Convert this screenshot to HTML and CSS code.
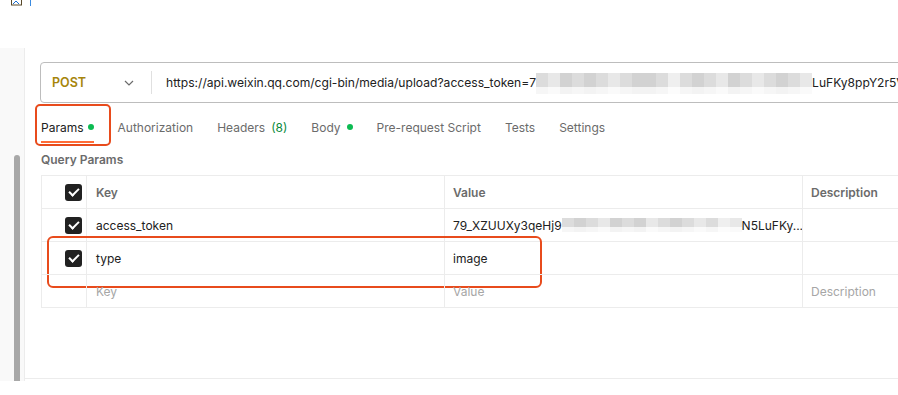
FILE: index.html
```html
<!DOCTYPE html>
<html>
<head>
<meta charset="utf-8">
<link rel="stylesheet" href="styles.css">
</head>
<body>
<div class="topbar">
  <span class="broken"><svg width="12" height="6" viewBox="0 0 12 6"><rect x="0.5" y="-3" width="10" height="8" fill="none" stroke="#5a4a2a" stroke-width="1"/><path d="M2 4 L5 1 L8 4" stroke="#1a6fd0" fill="none" stroke-width="1"/></svg></span>
  <span class="cursor"></span>
</div>
<div class="workspace">
  <div class="sidebar"><div class="thumb"></div></div>
  <div class="main">
    <div class="urlbar">
      <div class="method">POST <svg class="chev" width="10" height="6" viewBox="0 0 10 6"><path d="M1 1 L5 5 L9 1" fill="none" stroke="#6b6b6b" stroke-width="1.2"/></svg></div>
      <div class="divider"></div>
      <div class="url">https://api.weixin.qq.com/cgi-bin/media/upload?access_token=7<span class="mosaic mos-url"><span class="c c2"></span><span class="c c3"></span><span class="c c1"></span><span class="c c2"></span><span class="c c1"></span><span class="c c2"></span><span class="c c3"></span><span class="c c2"></span><span class="c c1"></span><span class="c c1"></span><span class="c c2"></span><span class="c c4"></span><span class="c c2"></span><span class="c c1"></span><span class="c c2"></span><span class="c c3"></span><span class="c c1"></span><span class="c c2"></span><span class="c c3"></span><span class="c c2"></span><span class="c c1"></span><span class="c c2"></span><span class="c c3"></span></span>LuFKy8ppY2r5VbQ</div>
    </div>
    <div class="tabs">
      <div class="tab active">Params <span class="dot dot-tight"></span></div>
      <div class="tab">Authorization</div>
      <div class="tab">Headers <span class="count">(8)</span></div>
      <div class="tab">Body <span class="dot"></span></div>
      <div class="tab">Pre-request Script</div>
      <div class="tab">Tests</div>
      <div class="tab">Settings</div>
    </div>
    <div class="section-label">Query Params</div>
    <div class="table">
      <div class="row head">
        <div class="cell chk"><span class="box"></span></div>
        <div class="cell key">Key</div>
        <div class="cell val">Value</div>
        <div class="cell desc">Description</div>
      </div>
      <div class="row">
        <div class="cell chk"><span class="box"></span></div>
        <div class="cell key">access_token</div>
        <div class="cell val">79_XZUUXy3qeHj9<span class="mosaic mos-val"><span class="c c2"></span><span class="c c1"></span><span class="c c2"></span><span class="c c3"></span><span class="c c1"></span><span class="c c2"></span><span class="c c1"></span><span class="c c3"></span><span class="c c2"></span><span class="c c1"></span><span class="c c2"></span><span class="c c3"></span><span class="c c2"></span><span class="c c4"></span><span class="c c3"></span></span>N5LuFKy...</div>
        <div class="cell desc"></div>
      </div>
      <div class="row marked">
        <div class="cell chk"><span class="box"></span></div>
        <div class="cell key">type</div>
        <div class="cell val">image</div>
        <div class="cell desc"></div>
      </div>
      <div class="row placeholder">
        <div class="cell chk"></div>
        <div class="cell key">Key</div>
        <div class="cell val">Value</div>
        <div class="cell desc">Description</div>
      </div>
    </div>
  </div>
</div>
</body>
</html>
```
FILE: styles.css
```css
* { box-sizing: border-box; }
html, body { margin: 0; padding: 0; background: #fff; }
body {
  width: 898px;
  height: 395px;
  overflow: hidden;
  font-family: Inter, "Noto Sans", sans-serif;
  color: #212121;
}
.topbar {
  height: 48px;
  display: flex;
  align-items: flex-start;
  padding-left: 11px;
}
.broken { display: block; height: 6px; }
.broken svg { display: block; }
.cursor { width: 1px; height: 6px; background: #3b8be0; margin-left: 7px; }
.workspace {
  display: flex;
  height: 333px;
}
.sidebar {
  width: 25px;
  flex: none;
  background: #f9f9f9;
  border-right: 1px solid #ececec;
  display: flex;
  flex-direction: column;
  padding-top: 107px;
}
.thumb {
  margin-left: 14px;
  width: 6px;
  flex: 1;
  background: #a8a8a8;
  border-radius: 3px 3px 0 0;
}
.main {
  flex: 1;
  min-width: 0;
  overflow: hidden;
  border-bottom: 1px solid #ececec;
  padding: 14px 0 0 15px;
  height: 331px;
}
.urlbar {
  width: 900px;
  height: 41px;
  border: 1px solid #bdbdbd;
  border-radius: 4px;
  display: flex;
  align-items: center;
}
.method {
  width: 110px;
  flex: none;
  padding-left: 11px;
  font-size: 12.5px;
  font-weight: 600;
  color: #a6850b;
  display: flex;
  align-items: center;
}
.chev { margin-left: 38px; }
.divider { width: 1px; height: 23px; background: #e0e0e0; }
.url {
  padding-left: 14px;
  font-size: 12.1px;
  white-space: nowrap;
  display: flex;
  align-items: center;
}
.mosaic { display: inline-flex; flex: none; }
.mos-url { height: 21px; margin-top: 1px; }
.mos-url .c { width: 12px; height: 21px; }
.mos-val { height: 14px; }
.mos-val .c { width: 12px; height: 14px; }
.c1 { background: linear-gradient(#d2d2d2 0 65%, #f3f3f3 65%); }
.c2 { background: linear-gradient(#dcdcdc 0 65%, #f6f6f6 65%); }
.c3 { background: linear-gradient(#e8e8e8 0 65%, #fafafa 65%); }
.c4 { background: linear-gradient(#efefef 0 65%, #fcfcfc 65%); }
.tabs {
  display: flex;
  gap: 24px;
  height: 43px;
  padding-top: 5px;
  padding-left: 1px;
}
.tab {
  font-size: 12px;
  color: #6b6b6b;
  display: flex;
  align-items: center;
  height: 100%;
  position: relative;
}
.tab.active { color: #212121; }
.tab.active::before {
  content: "";
  position: absolute;
  left: 0;
  right: 0;
  bottom: 3px;
  height: 2px;
  background: #ff6c37;
}
.tab.active::after {
  content: "";
  position: absolute;
  left: -6px;
  right: -17px;
  top: -4px;
  bottom: 0;
  border: 2.5px solid #e84b1c;
  border-radius: 5px;
}
.dot {
  width: 6px;
  height: 6px;
  border-radius: 50%;
  background: #0cbb52;
  margin-left: 6px;
}
.dot.dot-tight { margin-left: 4px; }
.count { color: #0a8a3c; margin-left: 6px; }
.section-label {
  font-size: 12px;
  font-weight: 600;
  color: #6b6b6b;
  height: 29px;
  padding-top: 6px;
  padding-left: 1px;
}
.table {
  margin-left: 1px;
  width: 900px;
  border: 1px solid #ececec;
}
.row {
  display: flex;
  height: 33px;
  border-top: 1px solid #ececec;
  position: relative;
}
.row.head { border-top: 0; height: 32px; }
.cell {
  display: flex;
  align-items: center;
  font-size: 12px;
  color: #212121;
  white-space: nowrap;
  overflow: hidden;
}
.chk { width: 45px; border-right: 1px solid #ececec; justify-content: flex-end; padding-right: 4px; }
.key { width: 358px; padding-left: 9px; border-right: 1px solid #ececec; }
.val { width: 358px; padding-left: 8px; border-right: 1px solid #ececec; }
.desc { flex: 1; padding-left: 8px; }
.head .cell { font-weight: 600; color: #6b6b6b; }
.placeholder .cell { color: #a6a6a6; }
.box {
  width: 17px;
  height: 17px;
  border-radius: 3px;
  background: #212121;
  position: relative;
}
.box::after {
  content: "";
  position: absolute;
  left: 6px;
  top: 2.5px;
  width: 4px;
  height: 8px;
  border: solid #fff;
  border-width: 0 2.5px 2.5px 0;
  transform: rotate(45deg);
}
.row.marked::after {
  content: "";
  position: absolute;
  left: 5px;
  width: 491px;
  top: -6px;
  height: 48px;
  border: 2.5px solid #e84b1c;
  border-radius: 6px;
}
```
